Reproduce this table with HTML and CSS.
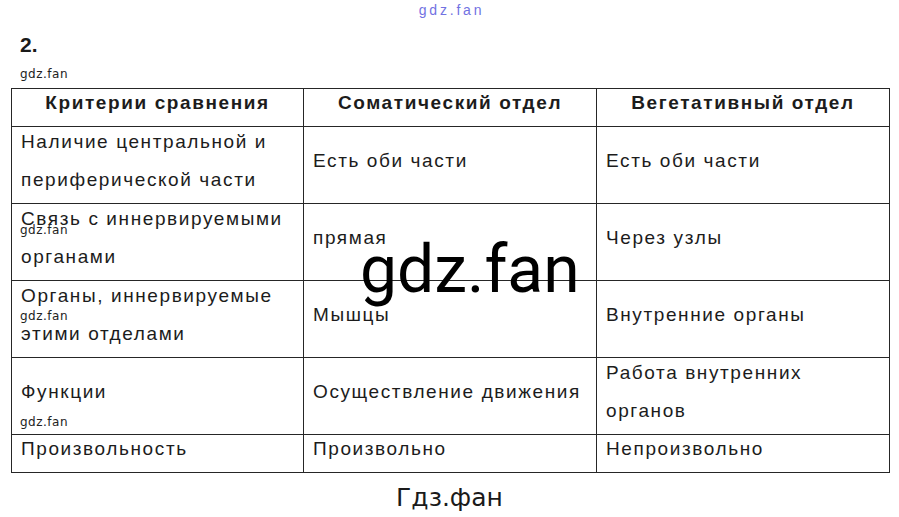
FILE: index.html
```html
<!DOCTYPE html>
<html lang="ru">
<head>
<meta charset="utf-8">
<title>gdz.fan — 2.</title>
<link rel="stylesheet" href="styles.css">
</head>
<body>
<div class="sheet">
  <div class="top-mark">gdz.fan</div>
  <div class="num">2.</div>
  <div class="mark mark-line">gdz.fan</div>
  <table class="cmp">
    <colgroup>
      <col class="c1"><col class="c2"><col class="c3">
    </colgroup>
    <thead>
      <tr class="r1">
        <th><div class="in">Критерии сравнения</div></th>
        <th><div class="in">Соматический отдел</div></th>
        <th><div class="in">Вегетативный отдел</div></th>
      </tr>
    </thead>
    <tbody>
      <tr class="r2">
        <td><div class="in">Наличие центральной и<br>периферической части</div></td>
        <td><div class="in">Есть оби части</div></td>
        <td><div class="in">Есть оби части</div></td>
      </tr>
      <tr class="r2">
        <td><div class="in">Связь с иннервируемыми<br>органами</div></td>
        <td><div class="in">прямая</div></td>
        <td><div class="in">Через узлы</div></td>
      </tr>
      <tr class="r2">
        <td><div class="in">Органы, иннервируемые<br>этими отделами</div></td>
        <td><div class="in">Мышцы</div></td>
        <td><div class="in">Внутренние органы</div></td>
      </tr>
      <tr class="r2">
        <td><div class="in">Функции</div></td>
        <td><div class="in">Осуществление движения</div></td>
        <td><div class="in">Работа внутренних<br>органов</div></td>
      </tr>
      <tr class="r1">
        <td><div class="in">Произвольность</div></td>
        <td><div class="in">Произвольно</div></td>
        <td><div class="in">Непроизвольно</div></td>
      </tr>
    </tbody>
  </table>
  <div class="caption">Гдз.фан</div>

  <div class="mark mark-a">gdz.fan</div>
  <div class="mark mark-b">gdz.fan</div>
  <div class="mark mark-c">gdz.fan</div>
  <div class="big-mark">gdz.fan</div>
</div>
</body>
</html>
```

FILE: styles.css
```css
html, body {
  margin: 0;
  padding: 0;
  background: #ffffff;
}

.sheet {
  position: relative;
  width: 899px;
  height: 517px;
  color: #1c1c1c;
  font-family: "Liberation Sans", Arial, sans-serif;
}

.top-mark {
  height: 20px;
  line-height: 20px;
  font-size: 14px;
  letter-spacing: 2.8px;
  text-align: center;
  color: #7272e2;
  padding-left: 4px;
}

.num {
  margin: 13px 0 0 20px;
  font-size: 21px;
  line-height: 24px;
  font-weight: bold;
  color: #1a1a1a;
}

.mark {
  font-family: "DejaVu Sans", Verdana, sans-serif;
  font-size: 12px;
  line-height: 14px;
  letter-spacing: 0.5px;
  color: #222222;
}

.mark-line {
  margin: 10px 0 0 20px;
}

.cmp {
  margin: 7px 0 0 11px;
  width: 878px;
  border-collapse: collapse;
  table-layout: fixed;
  font-size: 19px;
  line-height: 38px;
  letter-spacing: 1.6px;
}

.c1 { width: 292px; }
.c2 { width: 293px; }
.c3 { width: 293px; }

.cmp th,
.cmp td {
  border: 1px solid #262626;
  padding: 0 0 0 9px;
  vertical-align: middle;
  text-align: left;
  font-weight: normal;
}

.cmp th {
  text-align: center;
  font-weight: bold;
  padding: 0;
}

.r1 th, .r1 td { height: 37px; }
.r2 td { height: 76px; }

.in {
  margin-top: -9px;
  white-space: nowrap;
}

.caption {
  margin-top: 11px;
  text-align: center;
  font-family: "DejaVu Sans", Verdana, sans-serif;
  font-size: 25px;
  line-height: 28px;
  color: #1a1a1a;
}

.mark-a, .mark-b, .mark-c {
  position: absolute;
  left: 20px;
}
.mark-a { top: 223px; }
.mark-b { top: 309px; }
.mark-c { top: 415px; }

.big-mark {
  position: absolute;
  left: 360px;
  top: 237px;
  font-family: Roboto, "Liberation Sans", sans-serif;
  font-size: 66px;
  line-height: 66px;
  color: #000000;
}
```
